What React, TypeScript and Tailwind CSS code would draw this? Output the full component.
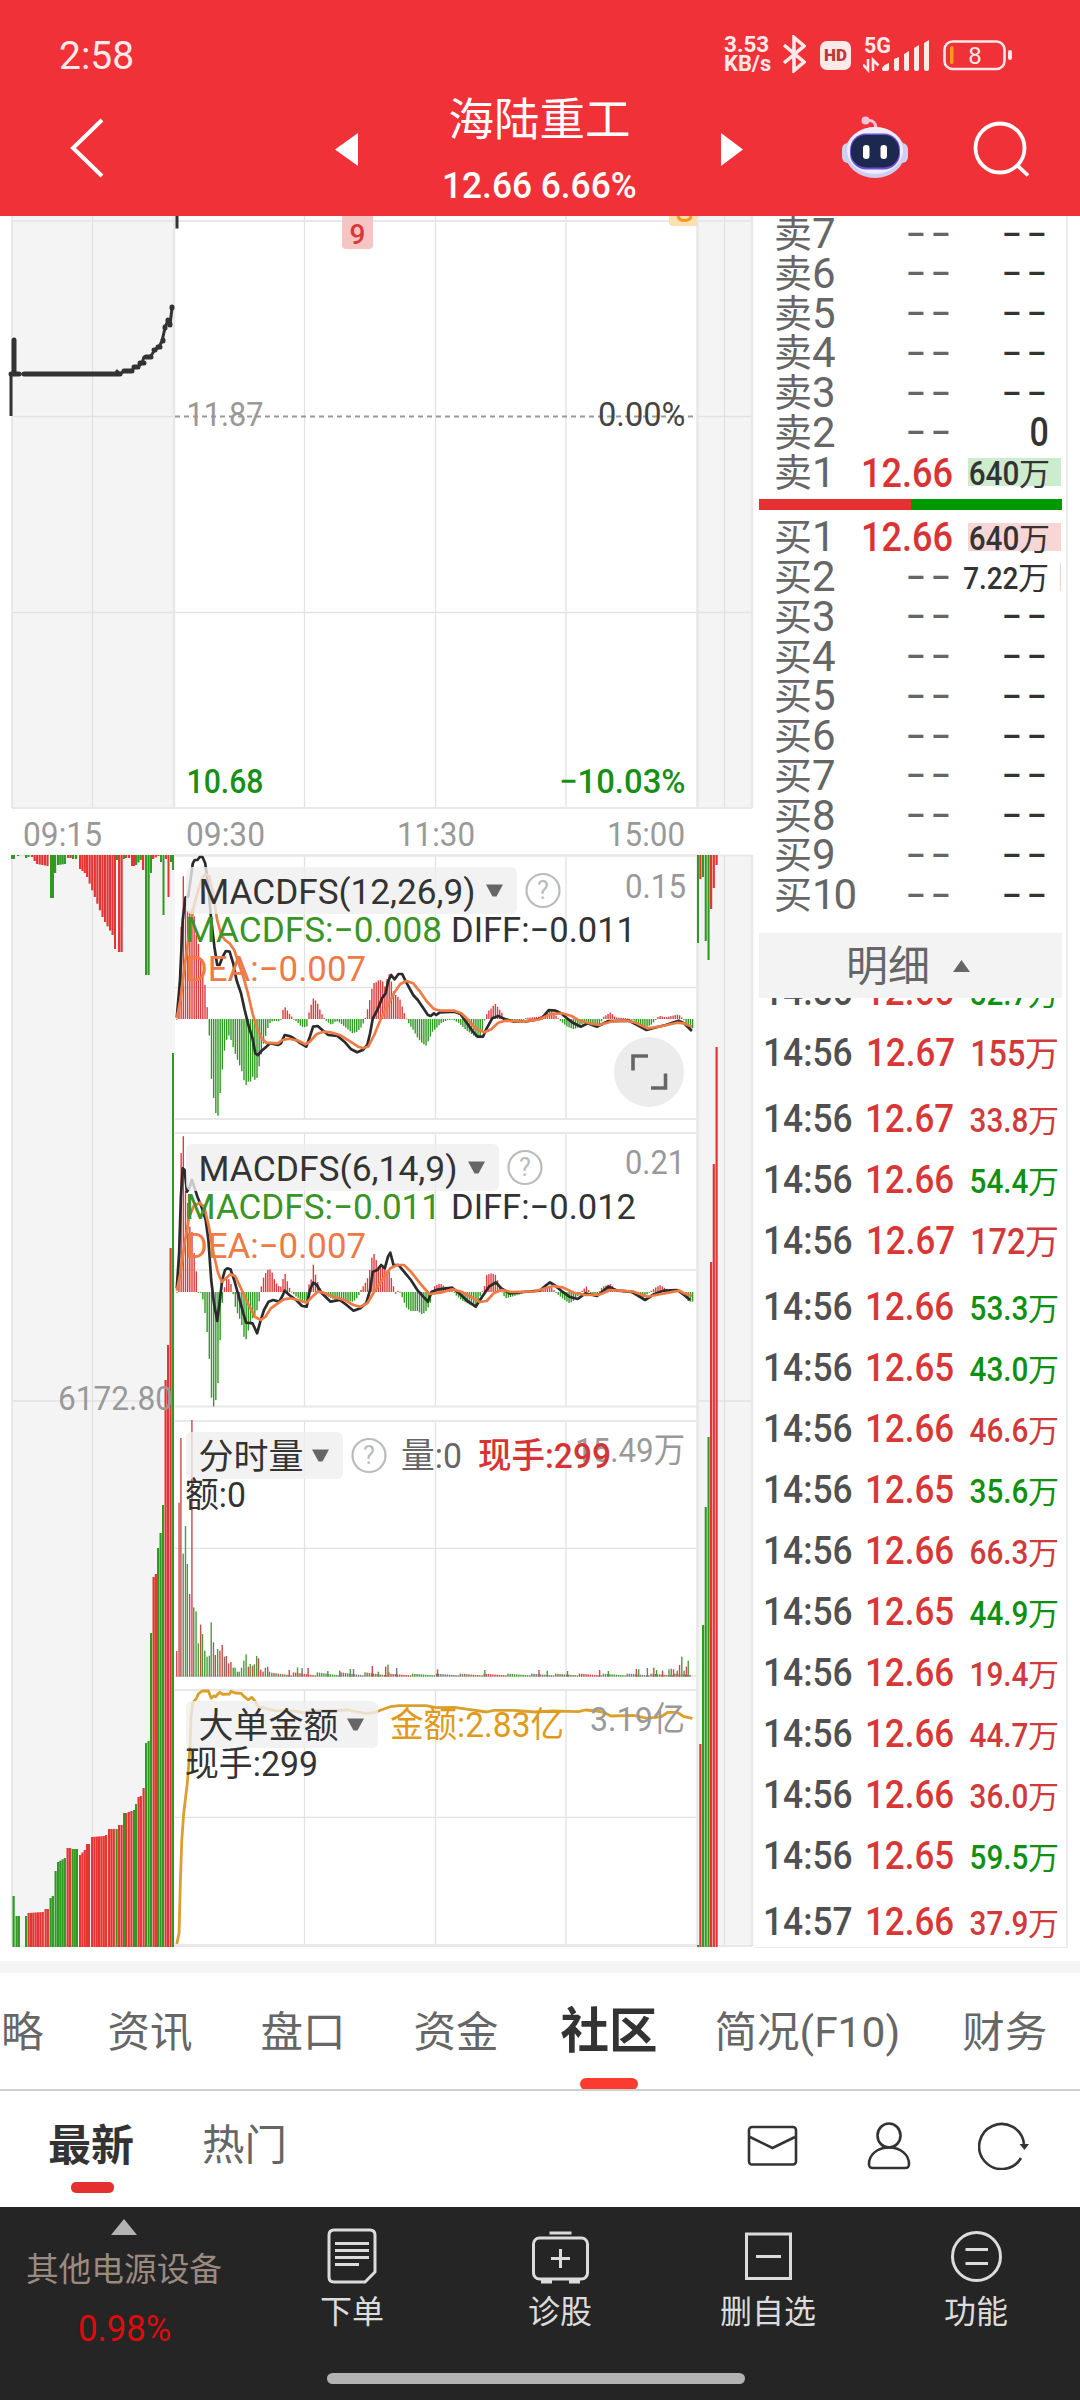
import type { ReactNode } from "react";

const RED = "#e43434";
const GREEN = "#2f9a22";

type Pt = [number, number];

// "x:y x:y ..." => points
const parse = (s: string): Pt[] =>
  s
    .trim()
    .split(/\s+/)
    .map((p) => p.split(":").map(Number) as Pt);

// chart data is stored on a 1568-wide, 3x-high grid
const toX = (x: number) => x / 2.178;

const toPath = (s: string, top: number) =>
  parse(s)
    .map(
      ([x, y], i) =>
        `${i ? "L" : "M"}${toX(x).toFixed(1)} ${(top + y / 3).toFixed(1)}`
    )
    .join("");

const macd1 = {
  hist: "385:717 391:600 398:275 401:310 405:370 410:400 418:385 422:400 428:470 432:490 437:540 441:570 447:620 451:680 453:717 456:770 460:890 464:940 469:995 474:1017 479:945 484:870 489:810 495:770 500:765 505:790 512:820 520:850 526:870 531:900 536:915 540:905 546:905 550:890 558:905 563:870 568:830 574:790 580:760 585:735 590:725 600:722 606:725 612:717 616:690 620:680 626:692 632:705 640:717 650:730 656:740 668:742 670:717 674:690 682:655 690:665 697:690 703:708 710:722 722:735 732:722 742:730 755:745 768:760 778:755 788:740 795:717 800:690 806:655 812:610 818:608 825:600 832:600 840:625 845:575 850:590 858:640 866:650 872:660 878:690 885:715 892:735 900:750 910:775 920:790 928:797 934:780 942:755 950:745 960:730 975:720 985:717 1000:730 1015:750 1030:765 1040:775 1048:765 1056:717 1062:695 1070:685 1078:670 1086:685 1094:700 1100:720 1115:725 1130:727 1145:714 1160:712 1175:710 1190:700 1200:685 1210:705 1220:722 1235:740 1250:748 1262:740 1275:722 1290:735 1305:738 1315:710 1330:697 1340:712 1360:714 1375:717 1390:730 1405:742 1418:735 1428:720 1435:707 1450:712 1478:703 1488:717 1500:745 1509:745",
  diff: "385:712 392:600 398:420 404:352 410:350 415:300 420:250 424:240 430:240 435:231 441:231 447:250 453:310 460:420 467:500 473:555 478:555 485:530 492:513 500:515 508:550 515:600 525:640 533:690 541:735 550:775 556:820 562:825 570:812 580:800 588:790 605:795 612:790 620:765 630:768 640:775 655:790 667:800 675:770 682:740 692:738 702:750 715:765 735:768 750:785 765:808 778:817 790:810 800:795 806:760 812:715 822:690 832:655 840:640 845:605 852:585 859:598 868:582 876:582 884:605 890:620 900:645 910:660 920:680 932:705 938:708 945:700 950:705 958:697 990:695 1003:702 1015:725 1030:755 1040:770 1052:770 1060:745 1072:715 1085:708 1098:716 1120:725 1145:724 1165:720 1180:715 1195:690 1210:692 1222:700 1235:715 1250:730 1265:740 1280:730 1300:740 1325:723 1370:722 1388:735 1408:750 1430:742 1450:735 1478:722 1490:730 1507:753",
  dea: "385:715 393:660 402:560 412:460 422:380 432:330 440:295 448:282 456:290 464:340 473:420 482:465 490:480 500:490 510:510 520:550 530:590 540:640 550:700 560:745 570:775 580:788 605:790 615:780 630:776 650:782 665:793 675:785 690:762 705:755 720:757 740:765 760:782 780:800 790:804 802:800 815:765 830:715 845:675 860:635 872:612 885:603 900:610 915:635 930:665 945:687 960:692 990:692 1005:700 1020:720 1035:745 1055:757 1070:748 1085:728 1100:722 1140:725 1175:718 1200:702 1225:700 1245:708 1262:722 1285:730 1305:735 1330:725 1365:722 1385:728 1410:745 1435:740 1475:728 1490:730 1507:740",
};

const macd2 = {
  hist: "385:516 389:470 394:105 399:40 402:200 408:240 414:330 418:335 422:390 428:460 432:516 437:518 442:540 447:585 451:635 456:720 460:830 465:860 470:840 474:808 479:670 484:550 489:500 493:470 500:480 505:500 508:525 513:565 520:590 526:610 531:650 536:658 541:630 547:600 553:590 560:570 565:540 570:490 574:472 580:455 586:445 592:455 598:480 605:497 612:500 620:457 626:485 632:510 638:520 645:530 655:538 668:545 672:495 677:485 682:432 688:470 695:500 702:520 715:530 730:540 745:542 770:545 780:530 786:510 795:490 802:470 808:430 812:392 818:415 824:440 832:440 840:450 848:455 856:490 860:525 866:512 872:516 878:540 886:565 895:573 910:573 920:584 930:570 940:540 945:500 958:490 970:500 985:508 992:525 1005:540 1020:552 1035:560 1045:530 1055:500 1060:465 1070:460 1080:465 1088:500 1100:535 1115:530 1135:522 1150:514 1180:508 1200:500 1212:520 1225:535 1240:550 1252:540 1265:516 1278:498 1285:520 1300:525 1312:500 1330:492 1340:508 1365:518 1380:522 1400:535 1412:520 1425:505 1437:495 1455:510 1475:508 1485:520 1500:545 1508:545",
  diff: "385:505 390:400 394:230 398:145 402:150 407:215 412:205 418:180 423:200 430:230 440:265 448:300 454:360 460:480 466:550 473:603 479:540 484:480 490:450 495:445 502:448 510:480 520:530 530:580 536:608 550:610 560:640 567:605 575:570 585:545 595:540 608:545 615:528 620:512 630:525 645:540 658:558 668:560 675:510 682:488 690:495 700:518 720:545 740:540 755:555 770:572 785:565 798:548 806:510 812:455 822:450 830:435 838:445 845:410 850:398 857:435 868:435 880:455 895:480 910:512 932:545 940:515 955:508 985:503 1000:520 1020:545 1036:560 1050:530 1065:500 1080:487 1092:505 1110:520 1140:516 1175:512 1190:495 1198:487 1210:498 1225:515 1240:530 1258:537 1275:520 1300:528 1325:500 1345:512 1375:515 1405:540 1425:522 1445:512 1475:510 1490:525 1503:540",
  dea: "385:512 393:460 402:370 412:290 422:258 435:248 445:262 455:320 465:400 475:460 483:485 492:475 502:463 512:468 525:505 540:550 555:590 568:600 578:590 590:565 605:550 618:538 632:535 650:540 668:548 680:530 692:515 705:518 725:530 750:540 770:555 785:560 800:550 815:515 835:475 850:445 865:435 880:435 895:455 915:490 935:522 960:518 985:508 1005:515 1025:530 1045:546 1060:543 1075:520 1092:510 1115:516 1165:514 1205:498 1225:502 1250:518 1275:525 1305:524 1330:510 1380:515 1410:530 1440:522 1480:512 1490:520 1507:528",
};

const bigOrder =
  "385:792 390:758 393:600 396:480 400:400 408:310 414:200 416:110 420:68 428:55 432:42 440:33 454:33 460:55 466:47 470:50 478:37 485:43 500:42 503:34 512:39 525:40 532:50 541:60 548:52 555:62 563:82 575:84 600:92 640:93 660:98 690:93 760:90 775:95 795:100 815:98 830:90 850:80 870:77 928:77 950:83 990:82 1020:88 1060:96 1075:91 1120:91 1165:96 1205:93 1260:95 1275:90 1300:93 1315:97 1330:108 1380:106 1410:115 1440:110 1455:97 1475:97 1490:110 1508:115";

// opening minutes of the volume panel: x:top + colour
const volumeOpen =
  "385:753r 390:308r 394:114r 399:461k 404:378g 408:492g 413:582r 418:60r 422:622g 427:634g 432:730g 437:674r 441:702g 446:752g 451:770g 456:767g 460:667g 465:727k 469:765r 474:747g 479:752r 484:735r 489:770k 493:768r 498:790r 503:786r 508:803g 512:803g 517:815k 521:815g 526:803g 531:782g 536:763g 541:800r 545:792g 550:797r 554:793g 559:768g 563:775r 568:809r 573:815r 578:803g 583:800r 587:815g";
const volumePeaks =
  "630:810 648:802 658:804 671:804 714:813 740:812 763:807 770:807 811:798 824:815 840:800 845:794 864:804 953:808 1056:810 1174:810 1192:812 1236:813 1306:810 1325:813 1386:807 1391:808 1410:804 1424:803 1430:810 1443:812 1457:808 1462:806 1467:808 1475:812 1480:795 1485:770 1490:812 1495:800 1499:782";

// [from, to, height start, height end, colour]
type Run = [number, number, number, number, "r" | "g"];

const leftTop: Run[] = [
  [11, 15, 4, 4, "g"], [17, 20, 1, 1, "g"], [25, 30, 3, 2, "g"],
  [31, 36, 2, 6, "r"], [36, 49, 9, 11, "r"], [50, 54, 43, 43, "g"], [54, 57, 18, 18, "g"],
  [57, 66, 10, 9, "g"], [67, 72, 3, 3, "r"], [72, 78, 4, 4, "g"],
  [79, 86, 14, 18, "r"], [86, 104, 22, 62, "r"], [104, 114, 67, 80, "r"],
  [114, 116, 94, 94, "r"], [116, 118, 5, 5, "g"], [118, 123, 97, 97, "r"],
  [123, 125, 4, 4, "g"], [125, 131, 3, 3, "r"], [131, 135, 11, 11, "r"],
  [135, 142, 10, 5, "g"], [142, 145, 15, 15, "r"], [145, 150, 120, 120, "g"],
  [150, 152, 18, 18, "g"], [152, 160, 4, 1, "r"], [160, 162, 7, 7, "g"],
  [162.5, 164.5, 60, 60, "g"], [165, 167, 4, 4, "r"], [167.5, 169.5, 42, 42, "r"],
  [170, 172, 7, 7, "g"], [172, 174, 15, 15, "g"],
];

const leftBottom: Run[] = [
  [12.5, 15, 51, 51, "g"], [15.5, 20, 31, 31, "g"], [25, 27, 31, 31, "g"],
  [27.5, 44, 34, 35, "r"], [44.5, 49, 38, 38, "r"], [49.5, 54, 49, 51, "g"],
  [54.5, 57, 76, 76, "g"], [57, 66, 85, 89, "g"], [66.5, 71, 99, 99, "r"],
  [71.5, 78, 98, 98, "g"], [79, 86, 92, 97, "r"], [86, 90, 103, 103, "r"],
  [91, 105, 110, 111, "r"], [105, 108, 112, 114, "r"], [108, 115, 118, 118, "r"],
  [115.5, 118, 118, 118, "g"], [118, 123, 122, 122, "r"], [123, 125, 134, 134, "g"],
  [125, 133, 134, 136, "r"], [133, 137, 137, 143, "g"], [137.5, 142, 150, 151, "r"],
  [142.5, 145, 159, 159, "r"], [145, 147, 204, 204, "g"], [147.5, 150, 206, 206, "g"],
  [150, 152, 314, 314, "g"], [152.5, 157, 370, 373, "r"], [157, 159.5, 399, 399, "g"],
  [159.5, 162, 414, 414, "g"], [162, 164, 442, 442, "g"], [164.5, 167, 567, 567, "r"],
  [167, 169, 602, 602, "r"], [169.5, 172, 699, 699, "r"], [172, 174, 894, 894, "g"],
];

const rightTop: Run[] = [
  [697, 699, 88, 88, "g"], [699.3, 701.5, 24, 24, "r"], [702, 704, 22, 22, "g"],
  [704.7, 706.8, 86, 86, "g"], [707.5, 709.6, 105, 105, "g"],
  [710, 712.2, 54, 54, "r"], [712.7, 715, 33, 33, "r"], [715.5, 717.7, 10, 10, "r"],
];

const rightBottom: Run[] = [
  [697, 699, 2, 2, "g"], [699.3, 701.5, 203, 203, "r"], [702, 704.2, 322, 322, "g"],
  [704.7, 706.8, 440, 440, "g"], [707.5, 709.6, 510, 510, "g"],
  [710, 712.2, 685, 685, "r"], [712.7, 715, 783, 783, "r"], [715.5, 717.7, 900, 900, "r"],
];

function Runs({ runs, base, up }: { runs: Run[]; base: number; up?: boolean }) {
  return (
    <>
      {runs.map(([x0, x1, h0, h1, c], i) => {
        const n = Math.max(1, Math.round((x1 - x0) / 2.45));
        const step = (x1 - x0) / n;
        return Array.from({ length: n }, (_, k) => {
          const h = n === 1 ? h0 : h0 + ((h1 - h0) * k) / (n - 1);
          return (
            <rect
              key={`${i}-${k}`}
              x={x0 + k * step}
              y={up ? base - h : base}
              width={Math.min(step, 2.2)}
              height={h}
              fill={c === "r" ? RED : GREEN}
            />
          );
        });
      })}
    </>
  );
}

function Histogram({ data, top, zero }: { data: string; top: number; zero: number }) {
  const pts = parse(data);
  const out: ReactNode[] = [];
  let j = 0;
  for (let x = 385; x <= 1509; x += 4.72) {
    while (j < pts.length - 2 && pts[j + 1][0] < x) j++;
    const [a, b] = [pts[j], pts[j + 1]];
    const y = a[1] + ((b[1] - a[1]) * (x - a[0])) / (b[0] - a[0]);
    const h = (y - zero) / 3;
    const base = top + zero / 3;
    out.push(
      <rect
        key={x}
        x={toX(x) - 0.65}
        y={h < 0 ? base + h : base}
        width={1.4}
        height={Math.max(0.8, Math.abs(h))}
        fill={h < 0 ? "#e03c3c" : GREEN}
      />
    );
  }
  return <>{out}</>;
}

function Volume() {
  const fills: Record<string, string> = { r: "#cc4a4a", g: "#4a9c3c", k: "#777" };
  const bars: [number, number, string][] = volumeOpen.split(" ").map((b) => {
    const [x, rest] = b.split(":");
    return [Number(x), parseInt(rest), rest.slice(-1)];
  });
  for (let i = 0; i < 194; i++) {
    const noise = (i * 7919 + 31) % 11;
    bars.push([592 + i * 4.72, 826 - noise * (i < 55 ? 0.9 : 0.5), "rgkgrrkg"[(i * 13 + noise) % 8]]);
  }
  parse(volumePeaks).forEach(([x, y], i) => bars.push([x, y, "rgkrg"[i % 5]]));
  return (
    <>
      {bars.map(([x, y, c], i) => (
        <rect
          key={i}
          x={toX(x) - 0.7}
          y={1400 + y / 3}
          width={1.4}
          height={(830 - y) / 3}
          fill={fills[c]}
        />
      ))}
    </>
  );
}

interface LabelProps {
  x: number;
  y: number;
  w: number;
  fill?: string;
  size?: number;
  weight?: number;
  children: string;
}

function Label({ x, y, w, fill = "#333", size = 35, weight = 400, children }: LabelProps) {
  return (
    <text
      x={x}
      y={y}
      fontSize={size}
      fontWeight={weight}
      fill={fill}
      textLength={w}
      lengthAdjust="spacingAndGlyphs"
    >
      {children}
    </text>
  );
}

function Chip({ y, right, w, help = true, children }: { y: number; right: number; w: number; help?: boolean; children: string }) {
  return (
    <g>
      <rect x={186} y={y} width={right - 186} height={47} rx={6} fill="#efefef" fillOpacity={0.8} />
      <Label x={198.5} y={y + 37} w={w}>{children}</Label>
      <path d={`M${right - 31} ${y + 17.5}h17l-6.5 12h-4z`} fill="#666" />
      {help && (
        <g>
          <circle cx={right + 26} cy={y + 23.5} r={16.5} fill="none" stroke="#bbb" strokeWidth={2.2} />
          <text x={right + 26} y={y + 32} fontSize={25} fill="#bbb" textAnchor="middle">?</text>
        </g>
      )}
    </g>
  );
}

function Chart() {
  const cols = [304.5, 435.5, 566];
  const panels = [
    [855.5, 987.5, 1119],
    [1133, 1270, 1406.5],
    [1421, 1548.3, 1676],
    [1690, 1817.3, 1945],
  ];
  return (
    <svg
      className="h-[1732px] w-[754px] shrink-0 font-['Roboto','Noto_Sans_CJK_SC',sans-serif]"
      viewBox="0 216 754 1732"
    >
      {/* call auction areas */}
      <g fill="#f4f4f4">
        <path d="M12 216h163v592H12zM12 855h163v1092H12zM697 216h55v592h-55zM697 855h55v1092h-55z" />
      </g>

      {/* grid */}
      <g stroke="#e2e2e2" strokeWidth={1.3} fill="none">
        <path d="M92.5 216V808M92.5 855V1946M724.5 216V808M724.5 855V1946" />
        <path d="M12 612.5H752M12 416.5H174M698 416.5H752M12 1401H174M698 1401H752" />
        {cols.map((x) => (
          <path
            key={x}
            d={`M${x} 216V808${panels.map((p) => `M${x} ${p[0]}V${p[2]}`).join("")}`}
          />
        ))}
        {panels.map((p) => (
          <path key={p[1]} d={`M175 ${p[1]}H697`} />
        ))}
      </g>
      <g stroke="#e8e8e8" strokeWidth={2} fill="none">
        <path d="M12 216V808M12 855V1946M12 221H752M12 808H752M12 855.5H752M12 1946H752" />
        <path d="M174 216V808M697.5 216V808M697.5 855V1946M752 216V808M752 855V1946" strokeWidth={2.5} />
        {panels.map((p) => (
          <path key={p[0]} d={`M175 ${p[0]}H697M175 ${p[2]}H697`} />
        ))}
      </g>

      {/* price */}
      <path d="M175 416.5H697" stroke="#999" strokeWidth={1.8} strokeDasharray="5 4" />
      <path d="M11 416V374M177 216V228.500" stroke="#333" strokeWidth={3} fill="none" />
      <path
        d="M11 374H19M24 374H116L117 371L120 374L124 371H132L134 367H138L142 363L144 357H150L155 350L159 347L162 341L165 328V327L168 321L170 325L172 308"
        stroke="#333"
        strokeWidth={3}
        fill="none"
        strokeLinejoin="round"
      />
      <path
        d="M11 374H19M24 374H120M124 371H132M134 367H138M140 363H144M146 357H151M154 350H155M158 347H160M163 341V340M165 328V327M168 321V320M170 325V324M172 308V307M14 374V340"
        stroke="#333"
        strokeWidth={5}
        strokeLinecap="round"
        fill="none"
      />
      <path d="M342 216h31v29a4 4 0 0 1-4 4h-23a4 4 0 0 1-4-4z" fill="#f7c4c4" />
      <text x={357.500} y={244} fontSize={28} fontWeight={500} fill="#d93636" textAnchor="middle">9</text>
      <path d="M669 216h28v10h-24a4 4 0 0 1-4-4z" fill="#fde0b2" />
      <path d="M678 216c1 6 12 6 13 0" fill="none" stroke="#f39a1c" strokeWidth={3} />
      <Label x={186.5} y={426} w={77} fill="#999" size={34}>11.87</Label>
      <Label x={598} y={426} w={87.5} fill="#444" size={34}>0.00%</Label>
      <Label x={186.5} y={793} w={77} fill="#159015" size={34} weight={500}>10.68</Label>
      <Label x={559} y={793} w={126.5} fill="#159015" size={34} weight={500}>−10.03%</Label>
      <Label x={23} y={846} w={79} fill="#999" size={34}>09:15</Label>
      <Label x={186} y={846} w={79} fill="#999" size={34}>09:30</Label>
      <Label x={397} y={846} w={78} fill="#999" size={34}>11:30</Label>
      <Label x={607} y={846} w={78} fill="#999" size={34}>15:00</Label>

      {/* auction volume */}
      <Runs runs={leftTop} base={855} />
      <Runs runs={leftBottom} base={1947} up />
      <Runs runs={rightTop} base={855} />
      <Runs runs={rightBottom} base={1947} up />
      <Label x={58} y={1409.5} w={115} fill="#999" size={34}>6172.80</Label>

      <Histogram data={macd1.hist} top={780} zero={717} />
      <path d={toPath(macd1.diff, 780)} fill="none" stroke="#2b2b2b" strokeWidth={2.7} strokeLinejoin="round" />
      <path d={toPath(macd1.dea, 780)} fill="none" stroke="#ee7a44" strokeWidth={2.7} strokeLinejoin="round" />
      <Chip y={867} right={517} w={277}>MACDFS(12,26,9)</Chip>
      <Label x={625} y={897.500} w={61} fill="#999" size={34}>0.15</Label>
      <Label x={185} y={941.500} w={257} fill="#3a9426">MACDFS:−0.008</Label>
      <Label x={451} y={941.500} w={185} fill="#333">DIFF:−0.011</Label>
      <Label x={185} y={981} w={181} fill="#ee7a44">DEA:−0.007</Label>

      <Histogram data={macd2.hist} top={1120} zero={516} />
      <path d={toPath(macd2.diff, 1120)} fill="none" stroke="#2b2b2b" strokeWidth={2.7} strokeLinejoin="round" />
      <path d={toPath(macd2.dea, 1120)} fill="none" stroke="#ee7a44" strokeWidth={2.7} strokeLinejoin="round" />
      <Chip y={1144} right={499} w={259}>MACDFS(6,14,9)</Chip>
      <Label x={625} y={1174} w={60} fill="#999" size={34}>0.21</Label>
      <Label x={185} y={1218.500} w={256} fill="#3a9426">MACDFS:−0.011</Label>
      <Label x={451} y={1218.500} w={185} fill="#333">DIFF:−0.012</Label>
      <Label x={185} y={1257.500} w={181} fill="#ee7a44">DEA:−0.007</Label>

      <Volume />
      <Chip y={1432} right={343} w={105}>分时量</Chip>
      <Label x={575} y={1462} w={110} fill="#999" size={34}>15.49万</Label>
      <Label x={401} y={1468} w={61} fill="#666">量:0</Label>
      <Label x={478} y={1468} w={133} fill="#d63434" weight={500}>现手:299</Label>
      <Label x={185} y={1507} w={61} fill="#333">额:0</Label>

      <path d={toPath(bigOrder, 1680)} fill="none" stroke="#dba02c" strokeWidth={2.8} strokeLinejoin="round" />
      <Chip y={1701} right={378} w={140} help={false}>大单金额</Chip>
      <Label x={390} y={1737} w={174} fill="#e09a1a">金额:2.83亿</Label>
      <Label x={590} y={1731} w={95} fill="#999" size={34}>3.19亿</Label>
      <Label x={185} y={1776} w={133} fill="#333">现手:299</Label>

      {/* full screen button */}
      <circle cx={649} cy={1072} r={35} fill="#ececec" />
      <path d="M648 1056H633V1070.500M651 1088H665.500V1073.500" fill="none" stroke="#666" strokeWidth={3.6} />
    </svg>
  );
}

interface Quote {
  name: string;
  level: string;
  price?: string;
  volume?: string;
  bar?: string;
}

const sells: Quote[] = [
  { name: "卖", level: "7" },
  { name: "卖", level: "6" },
  { name: "卖", level: "5" },
  { name: "卖", level: "4" },
  { name: "卖", level: "3" },
  { name: "卖", level: "2", volume: "0" },
  { name: "卖", level: "1", price: "12.66", volume: "640万", bar: "bg-[#cdebcd]" },
];

const buys: Quote[] = [
  { name: "买", level: "1", price: "12.66", volume: "640万", bar: "bg-[#f9d6d6]" },
  { name: "买", level: "2", volume: "7.22万", bar: "border-r border-[#f0d0d0]" },
  { name: "买", level: "3" },
  { name: "买", level: "4" },
  { name: "买", level: "5" },
  { name: "买", level: "6" },
  { name: "买", level: "7" },
  { name: "买", level: "8" },
  { name: "买", level: "9" },
  { name: "买", level: "10" },
];

// number followed by an optional 万 unit
function Amount({ value, size = "text-[33px]", unit = "text-[31px]" }: { value: string; size?: string; unit?: string }) {
  const wan = value.endsWith("万");
  const num = wan ? value.slice(0, -1) : value;
  return (
    <span className="flex items-baseline">
      <span className={`origin-right scale-x-[0.9] font-medium ${size}`}>{num}</span>
      {wan && <span className={unit}>万</span>}
    </span>
  );
}

function Dashes() {
  return (
    <span className="inline-block origin-right scale-x-[1.3] pt-[2px] font-['Liberation_Mono',monospace] text-[42px] tracking-[-6px]">
      --
    </span>
  );
}

function QuoteRow({ q }: { q: Quote }) {
  return (
    <div className="flex h-[39.75px] shrink-0 items-center pl-[20px] leading-none">
      <div className="flex w-[85px] items-center pt-[1px] text-[#666]">
        <span className="text-[38px]">{q.name}</span>
        <span className="text-[42px] tracking-[-2px]">{q.level}</span>
      </div>
      {q.price ? (
        <span className="-ml-[12px] w-[106px] origin-right scale-x-[0.88] pt-[2px] text-right text-[41px] font-medium text-[#d93333]">
          {q.price}
        </span>
      ) : (
        <span className="w-[90px] text-right text-[#666]">
          <Dashes />
        </span>
      )}
      {q.bar ? (
        <span
          className={`ml-auto mr-[5px] flex h-[28px] w-[93px] items-center justify-end pr-[11px] pt-[3px] text-[#333] ${q.bar}`}
        >
          <Amount
            value={q.volume ?? ""}
            size={q.volume === "7.22万" ? "text-[31px]" : "text-[33px]"}
          />
        </span>
      ) : (
        <span className={q.volume ? "ml-auto mr-[17px] text-[#333]" : "ml-auto mr-[21px] text-[#333]"}>
          {q.volume ? (
            <span className="inline-block origin-right scale-x-[0.85] pt-[2px] text-[40px] font-medium">{q.volume}</span>
          ) : (
            <Dashes />
          )}
        </span>
      )}
    </div>
  );
}

const trades = [
  { time: "14:56", price: "12.66", amount: "52.7万", sell: true },
  { time: "14:56", price: "12.67", amount: "155万" },
  { time: "14:56", price: "12.67", amount: "33.8万", gap: true },
  { time: "14:56", price: "12.66", amount: "54.4万", sell: true },
  { time: "14:56", price: "12.67", amount: "172万" },
  { time: "14:56", price: "12.66", amount: "53.3万", sell: true, gap: true },
  { time: "14:56", price: "12.65", amount: "43.0万", sell: true },
  { time: "14:56", price: "12.66", amount: "46.6万" },
  { time: "14:56", price: "12.65", amount: "35.6万", sell: true },
  { time: "14:56", price: "12.66", amount: "66.3万" },
  { time: "14:56", price: "12.65", amount: "44.9万", sell: true },
  { time: "14:56", price: "12.66", amount: "19.4万" },
  { time: "14:56", price: "12.66", amount: "44.7万" },
  { time: "14:56", price: "12.66", amount: "36.0万" },
  { time: "14:56", price: "12.65", amount: "59.5万", sell: true },
  { time: "14:57", price: "12.66", amount: "37.9万", gap: true },
];

function OrderBook() {
  return (
    <div className="flex h-[1732px] w-[314px] flex-col overflow-hidden border-b border-r-2 border-[#ececec] bg-white">
      <div className="flex h-[276px] shrink-0 flex-col justify-end overflow-hidden">
        {sells.map((q) => (
          <QuoteRow key={q.level} q={q} />
        ))}
      </div>
      <div className="ml-[5px] mr-[4px] mt-[7px] flex h-[11px] shrink-0">
        <div className="w-[152px] bg-[#e62f30]" />
        <div className="flex-1 bg-[#009a00]" />
      </div>
      <div className="mt-[7px] flex shrink-0 flex-col">
        {buys.map((q) => (
          <QuoteRow key={q.level} q={q} />
        ))}
      </div>
      <div className="ml-[5px] mr-[4px] mt-auto flex h-[65px] shrink-0 items-center bg-[#f3f3f3] pl-[87px] text-[42px] text-[#666]">
        <span className="pt-[2px]">明细</span>
        <svg className="ml-[23px] h-[12px] w-[17px]" viewBox="0 0 17 12">
          <path d="M8.500 0L17 12H0z" fill="#666" />
        </svg>
      </div>
      <div className="flex h-[949px] shrink-0 flex-col justify-end overflow-hidden">
        {trades.map((t, i) => (
          <div
            key={i}
            className={`flex h-[61px] shrink-0 items-baseline pl-[9px] leading-[71px] ${t.gap ? "mt-[5px]" : ""}`}
          >
            <span className="w-[105px] origin-left scale-x-[0.895] text-[39.5px] font-medium text-[#505050]">
              {t.time}
            </span>
            <span className="w-[98px] origin-left scale-x-[0.885] text-[39.5px] font-medium text-[#d93636]">
              {t.price}
            </span>
            <span className={`ml-auto mr-[7px] ${t.sell ? "text-[#109010]" : "text-[#d03a3a]"}`}>
              {t.amount.length === 4 ? (
                <Amount value={t.amount} size="text-[36px]" unit="text-[34px]" />
              ) : (
                <Amount value={t.amount} />
              )}
            </span>
          </div>
        ))}
      </div>
    </div>
  );
}

function StatusBar() {
  return (
    <div className="flex h-[72px] items-start pl-[59px] pr-[67px] pt-[35px] text-[#ffe9e9]">
      <span className="text-[39px] leading-[42px]">2:58</span>
      <div className="ml-auto w-[45px] text-[22.500px] font-bold leading-[19px]">
        <div className="whitespace-nowrap">3.53</div>
        <div className="origin-left scale-x-[0.97] whitespace-nowrap">KB/s</div>
      </div>
      <svg className="ml-[13px] h-[38px] w-[24px]" viewBox="0 0 24 38" fill="none" stroke="currentColor" strokeWidth={3.600}>
        <path d="M2 10L22 27L12 35.500V2.500L22 11L2 28" />
      </svg>
      <span className="ml-[14px] mt-[6px] flex h-[29px] w-[31px] items-center justify-center rounded-[7px] bg-[#ffe9e9] text-[17px] font-black leading-none text-[#c4343c]">
        HD
      </span>
      <svg className="ml-[12px] h-[38px] w-[67px] font-['Roboto',sans-serif]" viewBox="0 0 67 38" fill="currentColor">
        <text x={1} y={18} fontSize={21.500} fontWeight={700}>5G</text>
        <path d="M5 24V35L0 29.500M10 36V25L15.500 30.500" stroke="currentColor" strokeWidth={2.600} fill="none" />
        <path d="M19 35Q18 31 26 28V34a2 2 0 0 1-2 2H20z" />
        <path d="M31 24l5-2V34a2 2 0 0 1-2 2h-1a2 2 0 0 1-2-2z" />
        <path d="M41 19l5-3V34a2 2 0 0 1-2 2h-1a2 2 0 0 1-2-2z" />
        <path d="M51 13l5-3V34a2 2 0 0 1-2 2h-1a2 2 0 0 1-2-2z" />
        <path d="M61 8l5-3V34a2 2 0 0 1-2 2h-1a2 2 0 0 1-2-2z" />
      </svg>
      <svg className="ml-[13px] h-[38px] w-[70px] font-['Roboto',sans-serif]" viewBox="0 0 70 38" fill="currentColor">
        <rect x={1.500} y={6.500} width={60} height={27.500} rx={8} fill="none" stroke="currentColor" strokeWidth={2.600} />
        <rect x={65} y={15} width={4} height={10} rx={2} />
        <rect x={7} y={11} width={3.500} height={18} rx={1.500} fill="#ff9a1e" />
        <text x={32} y={28.500} fontSize={24} textAnchor="middle">8</text>
      </svg>
    </div>
  );
}

function Robot() {
  return (
    <svg className="h-[64px] w-[66px]" viewBox="0 0 66 64">
      <path d="M24 6C31 4 34 8 34 14" fill="none" stroke="#f3c3d6" strokeWidth={3} />
      <circle cx={23.500} cy={5.500} r={4} fill="#f3c3d6" />
      <rect x={0} y={28} width={12} height={20} rx={6} fill="#d2d0f0" />
      <rect x={54} y={28} width={12} height={20} rx={6} fill="#d2d0f0" />
      <ellipse cx={33} cy={37.500} rx={30} ry={25.500} fill="#cfcdf2" />
      <ellipse cx={33} cy={35.500} rx={28} ry={23.500} fill="#eeecff" />
      <rect x={8} y={18.500} width={50} height={36} rx={16} fill="#6a4fd0" />
      <rect x={9} y={20} width={48} height={32.500} rx={15} fill="#1c2850" />
      <rect x={21} y={30} width={6.500} height={14} rx={3.200} fill="#fff" />
      <rect x={38.500} y={30} width={6.500} height={14} rx={3.200} fill="#fff" />
    </svg>
  );
}

function Header() {
  return (
    <header className="h-[216px] bg-[#f13138] text-white">
      <StatusBar />
      <div className="flex h-[144px] items-center pl-[70px] pr-[49px]">
        <svg className="mt-[8px] h-[60px] w-[34px]" viewBox="0 0 34 60">
          <path d="M32 2L3 30L32 58" fill="none" stroke="#fff" strokeWidth={4} />
        </svg>
        <svg className="ml-[231px] mt-[11px] h-[33px] w-[23px]" viewBox="0 0 23 33">
          <path d="M23 0V33L0 16.500z" fill="#fff" />
        </svg>
        <div className="flex w-[363px] flex-col items-center pt-[18px]">
          <h1 className="text-[45.500px] leading-[62px]">海陆重工</h1>
          <div className="mt-[4px] scale-x-[0.98] text-[36px] font-medium leading-[60px]">12.66 6.66%</div>
        </div>
        <svg className="mt-[11px] h-[33px] w-[22px]" viewBox="0 0 22 33">
          <path d="M0 0V33L22 16.500z" fill="#fff" />
        </svg>
        <div className="ml-auto mt-[6px]">
          <Robot />
        </div>
        <svg className="ml-[64px] mt-[10px] h-[56px] w-[59px]" viewBox="0 0 59 56" fill="none" stroke="#fff" strokeWidth={3.800}>
          <circle cx={28} cy={27} r={24.500} />
          <path d="M45 44L56 54.500" />
        </svg>
      </div>
    </header>
  );
}

const tabs = [
  { name: "略", left: "ml-[1px]" },
  { name: "资讯", left: "ml-[64px]" },
  { name: "盘口", left: "ml-[68px]" },
  { name: "资金", left: "ml-[68px]" },
  { name: "社区", left: "ml-[62px]", active: true },
  { name: "简况(F10)", left: "ml-[57px]" },
  { name: "财务", left: "ml-[62px]" },
];

function Tabs() {
  return (
    <nav className="flex h-[118px] items-stretch overflow-hidden border-b-2 border-[#cfcfcf] text-[#666]">
      {tabs.map((t) => (
        <div
          key={t.name}
          className={
            t.active
              ? `relative shrink-0 text-[48.500px] font-bold leading-[117px] text-[#333] ${t.left}`
              : `shrink-0 whitespace-nowrap text-[42.500px] leading-[119px] ${t.left}`
          }
        >
          {t.name}
          {t.active && (
            <span className="absolute -bottom-px left-[19px] h-[12px] w-[58px] rounded-[6px] bg-[#fb3a30]" />
          )}
        </div>
      ))}
    </nav>
  );
}

function SubTabs() {
  return (
    <div className="flex h-[116px] items-start pl-[48px] pr-[50px]">
      <div className="flex flex-col items-center">
        <span className="h-[91px] text-[43px] font-bold leading-[110px] text-[#333]">最新</span>
        <span className="ml-[2px] h-[11px] w-[43px] rounded-[5px] bg-[#e63030]" />
      </div>
      <span className="ml-[68px] text-[42.500px] leading-[110px] text-[#666]">热门</span>
      <svg className="ml-auto mt-[34px] h-[42px] w-[52px]" viewBox="0 0 52 42" fill="none" stroke="#333" strokeWidth={2.600}>
        <rect x={2} y={2} width={47} height={37.500} rx={3} />
        <path d="M3 12L25.500 23L48 12" />
      </svg>
      <svg className="ml-[68px] mt-[31px] h-[48px] w-[44px]" viewBox="0 0 44 48" fill="none" stroke="#333" strokeWidth={2.600}>
        <ellipse cx={22} cy={13.500} rx={11.500} ry={12} />
        <path d="M22 25.500C10 25.500 2 33 2 42C2 45 3 46 6 46H38C41 46 42 45 42 42C42 33 34 25.500 22 25.500z" />
      </svg>
      <svg className="ml-[67px] mt-[31px] h-[48px] w-[52px]" viewBox="0 0 52 48" fill="none" stroke="#333" strokeWidth={2.600}>
        <path d="M46 22A22.500 22.500 0 1 0 43 36" />
        <path d="M41.500 22h9.500l-4.500 6z" fill="#333" stroke="none" />
      </svg>
    </div>
  );
}

const actions: { name: string; icon: ReactNode }[] = [
  {
    name: "下单",
    icon: (
      <>
        <path d="M10 3H46Q51 3 51 8V45L41 55H10Q5 55 5 50V8Q5 3 10 3z" />
        <path d="M11 16.500H45M11 23.500H45M11 30.500H45M11 37.500H35" />
      </>
    ),
  },
  {
    name: "诊股",
    icon: (
      <>
        <rect x={1.500} y={11} width={54} height={41} rx={6} />
        <path d="M17.500 6H39.500M28.500 22V41M19 31.500H38" />
        <path d="M9 54.500h11M37 54.500h11" strokeWidth={4} />
      </>
    ),
  },
  {
    name: "删自选",
    icon: (
      <>
        <rect x={6.500} y={7} width={44} height={44.500} />
        <path d="M16 29.500H41" />
      </>
    ),
  },
  {
    name: "功能",
    icon: (
      <>
        <circle cx={28.500} cy={29.500} r={24} />
        <path d="M17.500 22.500H40M17.500 36.500H40" />
      </>
    ),
  },
];

function BottomBar() {
  return (
    <footer className="h-[193px] bg-[#252525] text-[#dcdcdc]">
      <div className="flex h-[166px]">
        <div className="flex w-[248px] flex-col items-center pt-[12px]">
          <svg className="h-[16px] w-[26px]" viewBox="0 0 26 16">
            <path d="M13 0L26 16H0z" fill="#b4b4b4" />
          </svg>
          <span className="mt-[10px] text-[32.700px] leading-[50px] text-[#9b8a80]">其他电源设备</span>
          <span className="ml-[2px] mt-[9px] scale-x-[0.94] text-[37px] leading-[50px] text-[#dd0c0c]">0.98%</span>
        </div>
        {actions.map((a) => (
          <div key={a.name} className="flex w-[208px] flex-col items-center pt-[20px]">
            <svg className="h-[58px] w-[57px]" viewBox="0 0 57 58" fill="none" stroke="#dcdcdc" strokeWidth={3}>
              {a.icon}
            </svg>
            <span className="mt-[5px] text-[32px] leading-[44px]">{a.name}</span>
          </div>
        ))}
      </div>
      <div className="ml-[327px] h-[11px] w-[418px] rounded-full bg-[#b3b3b3]" />
    </footer>
  );
}

export default function App() {
  return (
    <div className="h-[2400px] w-[1080px] overflow-hidden bg-white font-['Roboto','Noto_Sans_CJK_SC',sans-serif]">
      <Header />
      <main className="flex h-[1732px]">
        <Chart />
        <OrderBook />
      </main>
      <div className="mt-[13px] h-[12px] bg-[#f4f4f4]" />
      <Tabs />
      <SubTabs />
      <BottomBar />
    </div>
  );
}
